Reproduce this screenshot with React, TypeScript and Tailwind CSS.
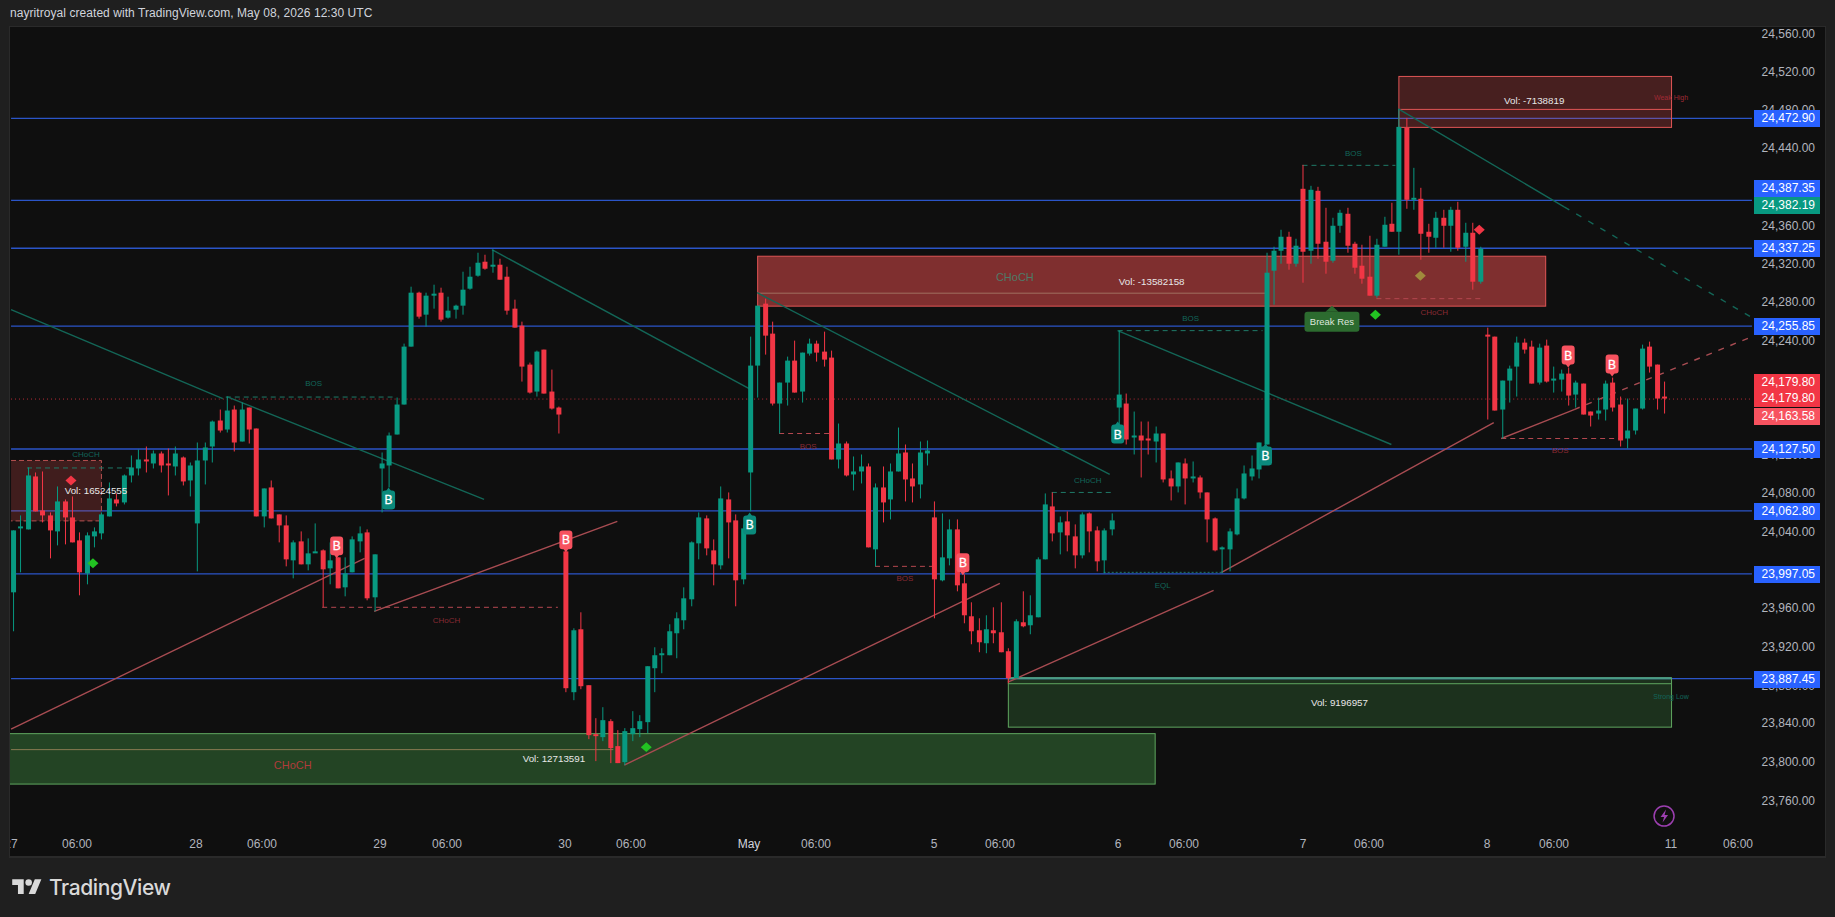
// everything inside the plot svg uses page coordinates (viewBox starts at 10,27)
const GREEN = "#089981";
const RED = "#f23645";

// [green?, wickTop, bodyTop, bodyBottom, wickBottom]
const candles: number[][] = [
   [1, 531, 531, 593, 632], [1, 516, 527, 529, 573], [1, 468, 476, 530, 530], [0, 473, 477, 512, 512], [0, 472, 511, 516, 523],
   [0, 513, 516, 531, 559], [1, 487, 502, 532, 546], [0, 500, 502, 518, 545], [0, 497, 518, 543, 543], [0, 533, 541, 573, 596],
   [1, 533, 536, 574, 585], [1, 528, 532, 537, 548], [1, 513, 515, 534, 540], [1, 483, 499, 517, 517], [0, 494, 500, 504, 507],
   [1, 475, 476, 503, 505], [1, 456, 468, 476, 483], [1, 450, 460, 469, 476], [0, 447, 460, 462, 473], [1, 451, 454, 464, 469],
   [0, 452, 454, 466, 473], [0, 449, 464, 466, 496], [1, 447, 454, 467, 476], [0, 457, 458, 482, 486], [1, 463, 466, 481, 497],
   [1, 443, 461, 524, 572], [1, 443, 448, 461, 485], [1, 421, 422, 447, 463], [0, 410, 421, 431, 433], [1, 397, 411, 430, 433],
   [0, 406, 410, 443, 452], [1, 403, 410, 442, 442], [0, 408, 408, 430, 444], [0, 429, 429, 517, 517], [1, 489, 489, 517, 528],
   [0, 481, 488, 519, 519], [0, 515, 515, 526, 543], [0, 516, 526, 560, 567], [1, 541, 543, 561, 579], [0, 532, 542, 565, 565],
   [1, 539, 554, 565, 571], [1, 524, 552, 554, 553], [0, 550, 551, 570, 608], [1, 543, 561, 569, 585], [0, 558, 558, 589, 589],
   [1, 558, 574, 588, 597], [1, 537, 540, 573, 573], [1, 527, 534, 542, 553], [0, 530, 533, 599, 601], [1, 555, 555, 598, 612],
   [1, 453, 464, 469, 513], [1, 433, 436, 466, 488], [1, 398, 405, 435, 435], [1, 344, 347, 405, 405], [1, 287, 293, 347, 347],
   [0, 292, 293, 317, 319], [1, 293, 296, 315, 327], [1, 285, 294, 296, 309], [0, 288, 293, 320, 322], [1, 297, 311, 318, 319],
   [1, 305, 306, 310, 319], [1, 272, 290, 306, 315], [1, 267, 277, 289, 290], [1, 253, 263, 276, 277], [0, 255, 262, 269, 270],
   [1, 250, 265, 267, 273], [0, 259, 265, 280, 280], [0, 267, 277, 311, 315], [0, 300, 309, 328, 328], [0, 322, 326, 367, 382],
   [0, 363, 365, 393, 394], [1, 351, 352, 392, 397], [0, 350, 350, 394, 394], [0, 370, 392, 409, 410], [0, 407, 408, 415, 434],
   [0, 552, 552, 689, 693], [1, 629, 631, 693, 701], [0, 613, 630, 687, 690], [0, 686, 686, 736, 740], [0, 719, 735, 737, 762],
   [1, 708, 721, 738, 742], [0, 720, 722, 749, 764], [0, 731, 747, 764, 764], [1, 729, 732, 763, 766], [1, 712, 729, 735, 742],
   [1, 716, 722, 730, 738], [1, 667, 667, 723, 734], [1, 648, 656, 669, 693], [1, 649, 654, 656, 674], [1, 625, 632, 656, 656],
   [1, 613, 619, 634, 659], [1, 588, 599, 621, 630], [1, 542, 543, 600, 607], [1, 513, 518, 544, 560], [0, 516, 519, 549, 556],
   [0, 540, 551, 565, 586], [1, 487, 499, 566, 570], [0, 493, 500, 523, 559], [0, 515, 521, 581, 607], [1, 525, 529, 580, 585],
   [1, 337, 366, 473, 512], [1, 306, 306, 366, 398], [0, 299, 304, 336, 355], [0, 322, 334, 404, 406], [1, 383, 383, 404, 434],
   [1, 357, 361, 383, 406], [0, 341, 361, 393, 393], [1, 353, 353, 392, 403], [1, 339, 344, 354, 356], [0, 341, 344, 353, 362],
   [0, 332, 352, 360, 367], [0, 351, 358, 460, 460], [1, 424, 444, 460, 469], [0, 442, 444, 476, 477], [1, 457, 472, 475, 491],
   [1, 455, 467, 472, 484], [0, 464, 467, 548, 548], [1, 484, 488, 550, 567], [0, 467, 488, 503, 523], [1, 464, 472, 500, 520],
   [1, 428, 454, 472, 472], [0, 445, 453, 480, 502], [0, 464, 479, 487, 503], [1, 442, 453, 485, 499], [1, 441, 451, 454, 466],
   [0, 502, 518, 580, 619], [1, 514, 558, 581, 582], [1, 520, 530, 559, 566], [0, 520, 530, 586, 592], [0, 575, 584, 616, 624],
   [0, 603, 617, 632, 645], [0, 619, 631, 643, 653], [1, 616, 630, 644, 654], [0, 608, 631, 634, 644], [0, 603, 633, 653, 653],
   [0, 649, 652, 679, 684], [1, 620, 622, 679, 679], [0, 592, 623, 627, 628], [1, 596, 616, 626, 635], [1, 558, 560, 618, 618],
   [1, 494, 505, 560, 560], [0, 493, 507, 534, 542], [1, 517, 523, 533, 555], [0, 512, 522, 536, 552], [0, 525, 537, 556, 569],
   [1, 513, 515, 556, 559], [0, 513, 514, 532, 553], [0, 527, 531, 562, 572], [1, 529, 531, 561, 574], [1, 514, 521, 530, 536],
   [1, 331, 395, 408, 430], [0, 394, 404, 440, 445], [1, 412, 436, 438, 455], [0, 422, 436, 441, 478], [0, 422, 439, 441, 455],
   [1, 427, 434, 442, 463], [0, 434, 434, 480, 483], [0, 471, 479, 487, 501], [1, 463, 463, 487, 493], [0, 459, 464, 479, 505],
   [1, 462, 477, 479, 483], [0, 476, 478, 493, 499], [0, 493, 493, 520, 543], [0, 518, 519, 551, 552], [1, 547, 548, 550, 574],
   [1, 529, 532, 550, 572], [1, 489, 499, 535, 536], [1, 466, 474, 499, 500], [1, 456, 469, 477, 481], [1, 443, 443, 470, 479],
   [1, 253, 273, 445, 445], [1, 247, 251, 271, 305], [1, 230, 237, 251, 264], [0, 232, 237, 264, 270], [1, 239, 246, 264, 267],
   [0, 165, 189, 252, 283], [1, 186, 190, 251, 264], [0, 187, 191, 244, 259], [0, 208, 242, 262, 274], [1, 218, 226, 261, 263],
   [1, 210, 213, 226, 233], [0, 208, 214, 246, 253], [0, 242, 244, 268, 274], [0, 245, 266, 279, 284], [0, 236, 277, 296, 296],
   [1, 239, 245, 296, 298], [1, 217, 225, 247, 247], [0, 203, 224, 232, 232], [1, 109, 127, 232, 255], [0, 118, 128, 200, 209],
   [1, 168, 198, 200, 210], [0, 188, 199, 234, 260], [0, 224, 232, 237, 253], [1, 212, 218, 238, 248], [0, 210, 218, 226, 248],
   [1, 207, 210, 226, 252], [0, 202, 210, 248, 251], [1, 223, 233, 247, 262], [0, 223, 233, 282, 290], [1, 247, 249, 282, 284],
   [0, 328, 335, 337, 420], [0, 337, 337, 411, 411], [1, 381, 381, 410, 439], [1, 366, 369, 381, 403], [1, 337, 343, 367, 397],
   [0, 339, 343, 350, 354], [0, 341, 347, 384, 384], [1, 344, 348, 383, 385], [0, 340, 346, 382, 383], [1, 367, 379, 381, 393],
   [1, 370, 374, 380, 392], [0, 368, 374, 396, 406], [1, 381, 383, 395, 408], [0, 384, 384, 415, 415], [0, 412, 412, 416, 427],
   [1, 398, 411, 414, 420], [1, 381, 384, 410, 421], [0, 378, 383, 408, 412], [0, 397, 405, 441, 447], [1, 399, 431, 439, 449],
   [1, 409, 409, 431, 435], [1, 345, 349, 409, 410], [0, 342, 347, 367, 373], [0, 365, 365, 399, 410], [0, 382, 397, 399, 414],
];

const blueLines = [118, 200, 248, 326, 449, 511, 574, 679];

const ticks = [
   ["24,560.00", 34], ["24,520.00", 72], ["24,480.00", 110], ["24,440.00", 148], ["24,360.00", 226], ["24,320.00", 264],
   ["24,280.00", 302], ["24,240.00", 341], ["24,120.00", 455], ["24,080.00", 493], ["24,040.00", 532], ["23,960.00", 608],
   ["23,920.00", 647], ["23,880.00", 686], ["23,840.00", 723], ["23,800.00", 762], ["23,760.00", 801],
] as [string, number][];

const priceTags = [
   ["24,472.90", 118, "bg-[#2962ff]"], ["24,387.35", 188, "bg-[#2962ff]"], ["24,382.19", 205, "bg-[#089981]"], ["24,337.25", 248, "bg-[#2962ff]"],
   ["24,255.85", 326, "bg-[#2962ff]"], ["24,179.80", 382, "bg-[#f23645]"], ["24,179.80", 398, "bg-[#f23645]"], ["24,163.58", 416, "bg-[#f7525f]"],
   ["24,127.50", 449, "bg-[#2962ff]"], ["24,062.80", 511, "bg-[#2962ff]"], ["23,997.05", 574, "bg-[#2962ff]"], ["23,887.45", 679, "bg-[#2962ff]"],
] as [string, number, string][];

const timeLabels = [
   ["27", 11], ["06:00", 77], ["28", 196], ["06:00", 262], ["29", 380], ["06:00", 447], ["30", 565], ["06:00", 631], ["May", 749], ["06:00", 816],
   ["5", 934], ["06:00", 1000], ["6", 1118], ["06:00", 1184], ["7", 1303], ["06:00", 1369], ["8", 1487], ["06:00", 1554], ["11", 1671], ["06:00", 1738],
] as [string, number][];

// x1, y1, x2, y2
const tealLines = [[10, 310, 222, 399], [226, 397, 483.6, 500], [491.5, 250, 749, 389], [757, 293, 1110, 475], [1118, 331, 1392, 445], [1399, 109, 1565, 207]];
const redLines = [[10, 730, 364, 559], [373.5, 612, 617, 522], [624, 766, 1000, 584], [1008, 683, 1214, 591], [1222, 573, 1494.5, 423], [1502, 439, 1575, 410]];

// x1, x2, y
const tealDashes = [[225, 395, 397.5], [26, 130, 468.5], [1118, 1263, 331], [1303, 1396, 165.5], [1052, 1112, 493]];
const redDashes = [[321.5, 557.5, 608], [779, 829, 434], [875, 933, 567], [1377, 1482, 299], [1502, 1620, 439]];

// text, x, y, color, size
const smallTexts = [
   ["BOS", 313, 384, "#12665a", 8], ["CHoCH", 85, 455, "#12665a", 8], ["CHoCH", 446, 621, "#8a2a33", 8], ["BOS", 808, 447, "#8a2a33", 8],
   ["BOS", 905, 579, "#8a2a33", 8], ["CHoCH", 1088, 481, "#12665a", 8], ["EQL", 1163, 586, "#12665a", 8], ["BOS", 1191, 318, "#12665a", 8],
   ["BOS", 1354, 153, "#12665a", 8], ["CHoCH", 1435, 312, "#8a2a33", 8], ["BOS", 1561, 451, "#8a2a33", 8], ["Weak High", 1672, 98, "#a02a35", 7],
   ["Strong Low", 1672, 697, "#12665a", 7], ["CHoCH", 1015, 277, "#4f7a68", 11], ["CHoCH", 292, 766, "#b03b3b", 11],
] as [string, number, number, string, number][];

const volTexts = [
   ["Vol: 16524555", 95, 491], ["Vol: -13582158", 1152, 282], ["Vol: -7138819", 1535, 101], ["Vol: 12713591", 553.5, 759], ["Vol: 9196957", 1340, 703],
] as [string, number, number][];

// x, y of the pin's tip
const buyPins = [[388, 488], [749.5, 513], [1118, 422], [1266, 444]];
const sellPins = [[336, 559], [565.5, 553], [963, 576], [1569, 368], [1613, 377]];

// x, y, color
const diamonds = [[92, 564, "#22c322"], [646, 748, "#22c322"], [1376, 315, "#22c322"], [1421, 276, "#a08a3c"], [70, 481, "#f23645"], [1480, 230, "#f23645"]] as [number, number, string][];

function Candle({ data, index }: { data: number[]; index: number }) {
   const x = Math.round(11.9 + 7.38 * index);
   const color = data[0] ? GREEN : RED;
   return (
      <g fill={color}>
         <rect x={x} y={data[1]} width={1} height={data[4] - data[1]} />
         <rect x={x - 2} y={data[2]} width={5} height={Math.max(data[3] - data[2], 1.5)} />
      </g>
   );
}

function Pin({ x, y, up }: { x: number; y: number; up: boolean }) {
   // up = teal pin with the tip on top, otherwise red pin with the tip below
   const top = up ? y + 3 : y - 22;
   const tip = up ? `${x - 3},${y + 4} ${x},${y} ${x + 3},${y + 4}` : `${x - 3},${y - 4} ${x},${y} ${x + 3},${y - 4}`;
   return (
      <g fill={up ? "#0b8a7c" : "#f7525f"}>
         <polygon points={tip} />
         <rect x={x - 6.5} y={top} width={13} height={19} rx={3} />
         <text x={x} y={top + 14} textAnchor="middle" fontSize={12} fill="#ffffff" stroke="#ffffff" strokeWidth={0.3}>
            B
         </text>
      </g>
   );
}

export default function App() {
   return (
      <div className="flex h-[917px] w-full flex-col overflow-hidden bg-[#1f1f1f] font-['Liberation_Sans',sans-serif] text-[#b2b5be]">
         <div className="flex h-[26px] shrink-0 items-center pl-[10px] text-[12px] tracking-[0.06px] text-[#d1d4dc]">nayritroyal created with TradingView.com, May 08, 2026 12:30 UTC</div>

         <div className="mx-[9px] flex h-[832px] shrink-0 overflow-hidden border-x border-t border-b-2 border-[#2a2a2a] bg-[#0f0f0f]">
            <div className="flex w-[1743px] shrink-0 flex-col">
               <svg className="block h-[803px] w-[1743px]" viewBox="10 27 1743 803">
                  {blueLines.map((y) => (
                     <line key={y} x1={10} x2={1753} y1={y + 0.5} y2={y + 0.5} stroke="#2b55c8" strokeWidth={1.3} />
                  ))}
                  <line x1={10} x2={1753} y1={399.5} y2={399.5} stroke="#f23645" strokeOpacity={0.75} strokeWidth={1} strokeDasharray="1 3" />

                  {/* zones */}
                  <rect x={757.5} y={256.5} width={789} height={50} fill="#f05050" fillOpacity={0.5} stroke="#e05555" />
                  <line x1={757} x2={1266} y1={293.5} y2={293.5} stroke="#a0705f" />
                  <rect x={1399.5} y={76.5} width={273} height={51} fill="#f05050" fillOpacity={0.25} stroke="#e05555" />
                  <line x1={1399} x2={1672} y1={109.5} y2={109.5} stroke="#e05555" />
                  <rect x={10} y={461} width={90.5} height={60.5} fill="#f05050" fillOpacity={0.22} />
                  <path d="M10 461H100.5V521.5H10" fill="none" stroke="#b55050" strokeDasharray="5 3" />
                  <rect x={8} y={734.5} width={1147.5} height={50.5} fill="#4caf50" fillOpacity={0.33} stroke="#5fa65f" />
                  <line x1={10} x2={613} y1={750.5} y2={750.5} stroke="#8a7a52" />
                  <rect x={1008.5} y={678.5} width={664} height={49.5} fill="#4caf50" fillOpacity={0.22} stroke="#5fa65f" />
                  <line x1={1008} x2={1672} y1={684.5} y2={684.5} stroke="#5fa65f" />
                  <line x1={1008} x2={1672} y1={679} y2={679} stroke="#4a9a8a" strokeWidth={2} />

                  {/* structure lines */}
                  {tealDashes.map((d, i) => (
                     <line key={i} x1={d[0]} x2={d[1]} y1={d[2]} y2={d[2]} stroke="#1f7a68" strokeDasharray="5 4" />
                  ))}
                  {redDashes.map((d, i) => (
                     <line key={i} x1={d[0]} x2={d[1]} y1={d[2]} y2={d[2]} stroke="#b5474f" strokeDasharray="5 4" />
                  ))}
                  <line x1={1104} x2={1222} y1={573} y2={573} stroke="#1f7a68" strokeDasharray="2 2" />

                  {tealLines.map((l, i) => (
                     <line key={i} x1={l[0]} y1={l[1]} x2={l[2]} y2={l[3]} stroke="#136657" strokeWidth={1.4} />
                  ))}
                  <line x1={1565} y1={207} x2={1753} y2={318} stroke="#136657" strokeWidth={1.4} strokeDasharray="6 8" />
                  {redLines.map((l, i) => (
                     <line key={i} x1={l[0]} y1={l[1]} x2={l[2]} y2={l[3]} stroke="#a84c52" strokeWidth={1.4} />
                  ))}
                  <line x1={1575} y1={410} x2={1753} y2={337} stroke="#a84c52" strokeWidth={1.4} strokeDasharray="6 7" />

                  {candles.map((c, i) => (
                     <Candle key={i} data={c} index={i} />
                  ))}

                  {smallTexts.map((t, i) => (
                     <text key={i} x={t[1]} y={t[2] + t[4] * 0.36} textAnchor="middle" fontSize={t[4]} fill={t[3]}>
                        {t[0]}
                     </text>
                  ))}
                  {volTexts.map((t, i) => (
                     <text key={i} x={t[1]} y={t[2] + 3.5} textAnchor="middle" fontSize={9.8} fill="#e8e8e8">
                        {t[0]}
                     </text>
                  ))}

                  {diamonds.map((d, i) => (
                     <polygon key={i} points={`${d[0] - 5.5},${d[1]} ${d[0]},${d[1] - 5} ${d[0] + 5.5},${d[1]} ${d[0]},${d[1] + 5}`} fill={d[2]} />
                  ))}
                  {buyPins.map((p, i) => (
                     <Pin key={i} x={p[0]} y={p[1]} up={true} />
                  ))}
                  {sellPins.map((p, i) => (
                     <Pin key={i} x={p[0]} y={p[1]} up={false} />
                  ))}

                  {/* break res tag */}
                  <polygon points="1326,312 1332.5,306 1339,312" fill="#2c6b2f" />
                  <rect x={1305} y={312} width={55} height={20} rx={3} fill="#2c6b2f" />
                  <text x={1332.5} y={325.5} textAnchor="middle" fontSize={9.5} fill="#dfe8df">
                     Break Res
                  </text>

                  {/* lightning badge */}
                  <circle cx={1665} cy={817} r={10} fill="none" stroke="#9c3fb0" strokeWidth={1.5} />
                  <path d="M1667 810.5L1661.5 818H1665L1663.5 823.5L1669 816H1665.5Z" fill="#9c3fb0" />
               </svg>

               <div className="relative h-[27px] overflow-hidden text-[12px]">
                  {timeLabels.map((t, i) => (
                     <span key={i} className={t[0] === "May" ? "absolute top-[6px] -translate-x-1/2 text-[#d1d4dc]" : "absolute top-[6px] -translate-x-1/2"} style={{ left: t[1] - 10 }}>
                        {t[0]}
                     </span>
                  ))}
               </div>
            </div>

            <div className="relative flex-1 text-[12px]">
               {ticks.map((t) => (
                  <span key={t[0]} className="absolute right-[10px] leading-[14px]" style={{ top: t[1] - 34 }}>
                     {t[0]}
                  </span>
               ))}
               {priceTags.map((t) => (
                  <span key={t[0] + t[1]} className={`absolute left-[1px] flex h-[17px] w-[66px] items-center justify-end pr-[5px] text-white ${t[2]}`} style={{ top: t[1] - 35.5 }}>
                     {t[0]}
                  </span>
               ))}
            </div>
         </div>

         <div className="flex flex-1 items-center gap-[7px] pl-[12px] pb-[1px]">
            <svg width="30" height="23" viewBox="0 0 36 28" fill="#d9d9d9">
               <path d="M14 22H7V11H0V4h14v18zM28 22h-8l7.5-18h8L28 22z" />
               <circle cx="20" cy="8" r="4" />
            </svg>
            <span className="font-['Inter',sans-serif] text-[21px] leading-none font-medium tracking-[-0.4px] text-[#d9d9d9]">TradingView</span>
         </div>
      </div>
   );
}
